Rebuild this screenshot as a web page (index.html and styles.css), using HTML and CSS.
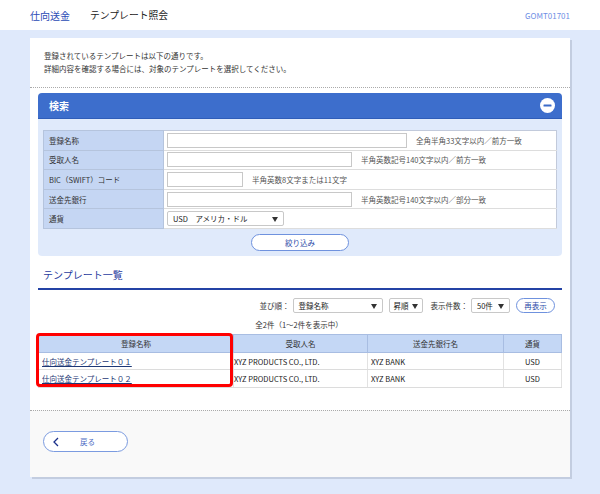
FILE: index.html
```html
<!DOCTYPE html>
<html lang="ja">
<head>
<meta charset="utf-8">
<title>テンプレート照会</title>
<link rel="stylesheet" href="styles.css">
</head>
<body>
<header class="topbar">
  <span class="crumb">仕向送金</span>
  <span class="title">テンプレート照会</span>
  <span class="code">GOMT01701</span>
</header>
<main class="page">
  <div class="card">
    <div class="intro">
      <p>登録されているテンプレートは以下の通りです。</p>
      <p>詳細内容を確認する場合には、対象のテンプレートを選択してください。</p>
    </div>
    <div class="content">
      <section class="panel">
        <div class="panel-head">
          <span class="panel-title">検索</span>
          <svg class="minus" width="15" height="15" viewBox="0 0 15 15"><circle cx="7.5" cy="7.5" r="7.5" fill="#fff"/><rect x="3.5" y="6.5" width="8" height="2" rx="0.5" fill="#3b6bc9"/></svg>
        </div>
        <div class="panel-body">
          <table class="form">
            <tr><th>登録名称</th><td><span class="input w240"></span><span class="hint">全角半角33文字以内／前方一致</span></td></tr>
            <tr><th>受取人名</th><td><span class="input w185"></span><span class="hint">半角英数記号140文字以内／前方一致</span></td></tr>
            <tr><th>BIC（SWIFT）コード</th><td><span class="input w76"></span><span class="hint">半角英数8文字または11文字</span></td></tr>
            <tr><th>送金先銀行</th><td><span class="input w185"></span><span class="hint">半角英数記号140文字以内／部分一致</span></td></tr>
            <tr><th>通貨</th><td><span class="select cur">USD　アメリカ・ドル</span></td></tr>
          </table>
          <div class="btn-row"><span class="btn-pill narrow">絞り込み</span></div>
        </div>
      </section>

      <h2 class="section-title">テンプレート一覧</h2>

      <div class="sort-row">
        <span>並び順：</span>
        <span class="select s1">登録名称</span>
        <span class="select s2">昇順</span>
        <span class="lbl">表示件数：</span>
        <span class="select s3">50件</span>
        <span class="btn-pill small">再表示</span>
      </div>
      <p class="count">全2件（1～2件を表示中）</p>

      <div class="table-wrap">
        <table class="list">
          <colgroup><col class="c1"><col class="c2"><col class="c3"><col class="c4"></colgroup>
          <tr><th>登録名称</th><th>受取人名</th><th>送金先銀行名</th><th>通貨</th></tr>
          <tr><td class="name"><a href="#">仕向送金テンプレート０１</a></td><td class="recv">XYZ PRODUCTS CO., LTD.</td><td class="bank">XYZ BANK</td><td class="cur">USD</td></tr>
          <tr><td class="name"><a href="#">仕向送金テンプレート０２</a></td><td class="recv">XYZ PRODUCTS CO., LTD.</td><td class="bank">XYZ BANK</td><td class="cur">USD</td></tr>
        </table>
        <div class="highlight"></div>
      </div>
    </div>
    <div class="footer">
      <span class="back">
        <svg class="chev" width="6" height="10" viewBox="0 0 6 10"><polyline points="5,1 1,5 5,9" fill="none" stroke="#1a2f8a" stroke-width="1.3"/></svg>
        <span class="back-text">戻る</span>
      </span>
    </div>
  </div>
</main>
</body>
</html>
```
FILE: styles.css
```css
* { box-sizing: border-box; }
html, body { margin: 0; padding: 0; }
body {
  font-family: "Noto Sans CJK JP", "Noto Sans", sans-serif;
  font-size: 7.5px;
  color: #333;
  background: #dfe9fb;
  width: 600px;
  height: 494px;
  overflow: hidden;
}
p { margin: 0; }

.topbar {
  height: 30px;
  background: #fff;
  display: flex;
  align-items: center;
  padding: 0 30px;
}
.crumb { color: #2a4bb5; font-size: 10px; margin-right: 20px; }
.title { color: #222; font-size: 9.8px; }
.code { margin-left: auto; color: #6e8fe5; font-size: 8px; }

.page { padding: 8px 28px 16px 30px; }
.card {
  width: 540px;
  height: 439px;
  background: #fff;
  box-shadow: 2px 2px 0 #c3cde0;
  display: flex;
  flex-direction: column;
}
.intro {
  padding: 11px 14px 12px;
  line-height: 13px;
  color: #333;
  border-bottom: 1px dotted #aaa;
}
.content { padding: 5px 8px 0; flex: 1; }

.panel-head {
  height: 26px;
  background: #3d6ecc;
  border-radius: 4px 4px 0 0;
  border-bottom: 1px solid #2f5db8;
  display: flex;
  align-items: center;
  justify-content: space-between;
  padding: 0 7px 0 11px;
}
.panel-title { color: #fff; font-weight: bold; font-size: 10px; }
.panel-body {
  background: #e0eafb;
  border-radius: 0 0 4px 4px;
  padding: 11px 5px 5px;
}
.form {
  width: 100%;
  border-collapse: collapse;
  border: 1px solid #c2cadb;
}
.form tr { height: 19.6px; }
.form th {
  width: 120px;
  background: #c5d6f3;
  border: 1px solid #b5c4dd;
  text-align: left;
  font-weight: normal;
  padding: 0 0 0 5px;
}
.form td {
  background: #fff;
  border-bottom: 1px solid #ddd;
  padding: 0 0 0 3px;
  white-space: nowrap;
}
.form td > * { vertical-align: middle; }
.input {
  display: inline-block;
  height: 15px;
  border: 1px solid #c8c8c8;
  background: #fff;
}
.w240 { width: 240px; }
.w185 { width: 185px; }
.w76 { width: 76px; }
.hint { margin-left: 9px; color: #555; }

.select {
  display: inline-flex;
  align-items: center;
  height: 15px;
  border: 1px solid #c8c8c8;
  border-radius: 2px;
  background: #fff;
  padding-left: 5px;
  position: relative;
  color: #222;
}
.select::after {
  content: "";
  position: absolute;
  right: 5px;
  top: 5px;
  border-left: 3.5px solid transparent;
  border-right: 3.5px solid transparent;
  border-top: 5px solid #333;
}
.select.cur { width: 117px; }

.btn-row { display: flex; justify-content: center; margin-top: 5px; }
.btn-pill {
  display: inline-flex;
  align-items: center;
  justify-content: center;
  border: 1px solid #6f92de;
  border-top-width: 1.5px;
  border-radius: 9px;
  background: #fff;
  color: #2a4aa8;
}
.btn-pill.narrow { width: 98px; height: 17px; }
.btn-pill.small { width: 39px; height: 15px; margin-left: 6px; }

.section-title {
  margin: 12px 0 0;
  padding: 0 5px 6px;
  font-size: 10px;
  line-height: 14px;
  font-weight: normal;
  color: #1f3b9e;
  border-bottom: 2px solid #2443a5;
}

.sort-row {
  margin-top: 8px;
  height: 15px;
  display: flex;
  justify-content: flex-end;
  align-items: center;
  padding-right: 7px;
}
.sort-row > span:first-child { margin-right: 3px; }
.s1 { width: 90px; }
.s2 { width: 34px; margin-left: 6px; padding-left: 4px; }
.s2::after { right: 4px; }
.s3 { width: 39px; }
.lbl { margin: 0 3px 0 8px; }

.count {
  margin-top: 6px;
  line-height: 12px;
  text-align: center;
  padding-right: 2px;
}

.table-wrap { position: relative; margin-top: 3px; width: 523px; }
.list {
  width: 523px;
  border-collapse: collapse;
  table-layout: fixed;
}
.c1 { width: 195px; }
.c2 { width: 134px; }
.c3 { width: 136px; }
.c4 { width: 58px; }
.list th {
  height: 18px;
  background: #c4d7f5;
  border: 1px solid #a8bde2;
  font-weight: normal;
  color: #333;
  text-align: center;
}
.list td {
  height: 17.5px;
  background: #fff;
  border-bottom: 1px solid #dcdcdc;
  border-left: 1px solid #e2e2e2;
  border-right: 1px solid #e2e2e2;
  white-space: nowrap;
  color: #222;
}
.list td.name { padding-left: 3px; }
.list td.recv { padding-left: 0; }
.list td.bank { padding-left: 3px; }
.list td.cur { text-align: center; }
.list a { color: #1d3775; text-decoration: underline; }

.highlight {
  position: absolute;
  left: -2px;
  top: -1px;
  width: 197px;
  height: 54px;
  border: 3px solid #ff0000;
  border-radius: 4px;
  pointer-events: none;
}

.footer {
  border-top: 1px dotted #aaa;
  background: #f9f9f9;
  padding: 20px 13px 25px;
  height: 67px;
}
.back {
  width: 85px;
  height: 21px;
  border: 1px solid #7b9be0;
  border-width: 1.5px 1px 1.5px 1px;
  border-radius: 11px;
  background: #fff;
  display: flex;
  align-items: center;
  padding-left: 9px;
}
.chev { display: block; }
.back-text { margin-left: 21px; color: #4d6cc4; }
```
